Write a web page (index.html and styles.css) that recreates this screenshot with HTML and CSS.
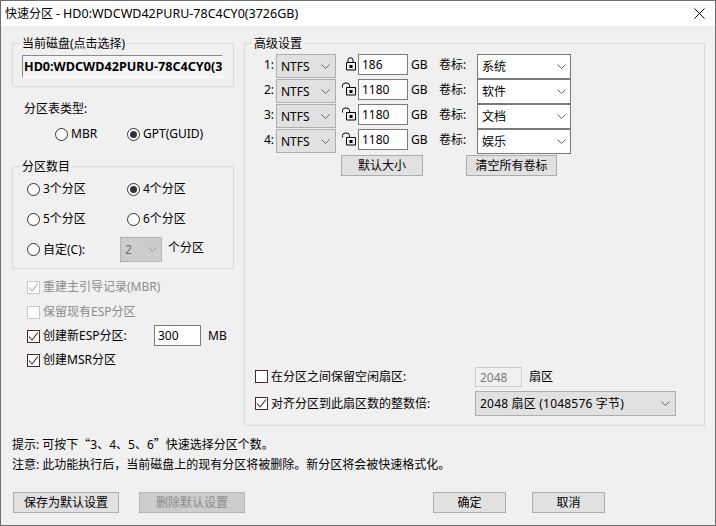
FILE: index.html
```html
<!DOCTYPE html>
<html lang="zh-CN">
<head>
<meta charset="utf-8">
<title>快速分区</title>
<link rel="stylesheet" href="styles.css">
</head>
<body>
<svg class="defs" width="0" height="0" aria-hidden="true">
  <symbol id="chev" viewBox="0 0 9 5"><path d="M.5.5 4.5 4.5 8.5.5" fill="none" stroke="currentColor"/></symbol>
  <symbol id="tick" viewBox="0 0 11 11"><path d="M1 5.5 4 9 10 1.5" fill="none" stroke="currentColor" stroke-width="1.1"/></symbol>
  <symbol id="lock" viewBox="0 0 16 14"><path d="M7 5.5V3.2a2.5 2.5 0 0 1 5 0V5.5M5.5 5.5h9v7.5h-9z" fill="none" stroke="#000"/><rect x="8.5" y="8" width="3" height="3"/></symbol>
  <symbol id="unlock" viewBox="0 0 16 14"><path d="M1.5 5.5V3.4a3.4 2.4 0 0 1 7 0V5.5M5.5 5.5h9v7.5h-9z" fill="none" stroke="#000"/><rect x="8.5" y="8" width="3" height="3"/></symbol>
</svg>
<div class="dialog">
  <header class="titlebar">
    <span class="title">快速分区 - <span class="title-disk">HD0:WDCWD42PURU-78C4CY0(3726GB)</span></span>
    <svg class="close" width="11" height="11" viewBox="0 0 11 11"><path d="M.5.5 10.5 10.5M10.5.5.5 10.5" stroke="#000" fill="none"/></svg>
  </header>

  <main class="main">
    <div class="left">
      <fieldset class="group">
        <legend>当前磁盘(点击选择)</legend>
        <div class="disk-body"><div class="disk-field">HD0:WDCWD42PURU-78C4CY0(3</div></div>
      </fieldset>

      <div class="table-type">分区表类型:</div>
      <div class="table-options">
        <label class="opt opt-mbr"><span class="radio"></span>MBR</label>
        <label class="opt"><span class="radio on"></span>GPT(GUID)</label>
      </div>

      <fieldset class="group count-group">
        <legend>分区数目</legend>
        <div class="count-body">
          <div class="count-row">
            <label class="opt opt-count"><span class="radio"></span>3个分区</label>
            <label class="opt"><span class="radio on"></span>4个分区</label>
          </div>
          <div class="count-row">
            <label class="opt opt-count"><span class="radio"></span>5个分区</label>
            <label class="opt"><span class="radio"></span>6个分区</label>
          </div>
          <div class="count-row custom-row">
            <label class="opt opt-custom"><span class="radio"></span>自定(C):</label>
            <span class="combo combo-off"><span>2</span><svg class="chev"><use href="#chev"/></svg></span>
            <span class="custom-unit">个分区</span>
          </div>
        </div>
      </fieldset>

      <div class="checks">
        <label class="chk-row off"><span class="check"><svg><use href="#tick"/></svg></span>重建主引导记录(MBR)</label>
        <label class="chk-row off second"><span class="check"></span>保留现有ESP分区</label>
        <div class="chk-row">
          <span class="check"><svg><use href="#tick"/></svg></span><span class="esp-label">创建新ESP分区:</span>
          <span class="field esp-size">300</span><span class="esp-unit">MB</span>
        </div>
        <label class="chk-row msr"><span class="check"><svg><use href="#tick"/></svg></span>创建MSR分区</label>
      </div>
    </div>

    <fieldset class="group right">
      <legend>高级设置</legend>
      <div class="adv-body">
        <div class="parts">
          <div class="part">
            <span class="p-num">1:</span>
            <span class="combo combo-fs"><span>NTFS</span><svg class="chev"><use href="#chev"/></svg></span>
            <svg class="lock"><use href="#lock"/></svg>
            <span class="field p-size">186</span>
            <span class="p-unit">GB</span><span class="p-tag">卷标:</span>
            <span class="combo combo-vol"><span>系统</span><svg class="chev"><use href="#chev"/></svg></span>
          </div>
          <div class="part">
            <span class="p-num">2:</span>
            <span class="combo combo-fs"><span>NTFS</span><svg class="chev"><use href="#chev"/></svg></span>
            <svg class="lock"><use href="#unlock"/></svg>
            <span class="field p-size">1180</span>
            <span class="p-unit">GB</span><span class="p-tag">卷标:</span>
            <span class="combo combo-vol"><span>软件</span><svg class="chev"><use href="#chev"/></svg></span>
          </div>
          <div class="part">
            <span class="p-num">3:</span>
            <span class="combo combo-fs"><span>NTFS</span><svg class="chev"><use href="#chev"/></svg></span>
            <svg class="lock"><use href="#unlock"/></svg>
            <span class="field p-size">1180</span>
            <span class="p-unit">GB</span><span class="p-tag">卷标:</span>
            <span class="combo combo-vol"><span>文档</span><svg class="chev"><use href="#chev"/></svg></span>
          </div>
          <div class="part">
            <span class="p-num">4:</span>
            <span class="combo combo-fs"><span>NTFS</span><svg class="chev"><use href="#chev"/></svg></span>
            <svg class="lock"><use href="#unlock"/></svg>
            <span class="field p-size">1180</span>
            <span class="p-unit">GB</span><span class="p-tag">卷标:</span>
            <span class="combo combo-vol"><span>娱乐</span><svg class="chev"><use href="#chev"/></svg></span>
          </div>
        </div>
        <div class="part-actions">
          <button class="btn btn-default" type="button">默认大小</button>
          <button class="btn btn-clear" type="button">清空所有卷标</button>
        </div>

        <div class="adv-bottom">
          <div class="sector-row">
            <span class="check"></span><span class="sector-label">在分区之间保留空闲扇区:</span>
            <span class="field field-off">2048</span><span class="sector-unit">扇区</span>
          </div>
          <div class="sector-row align-row">
            <span class="check"><svg><use href="#tick"/></svg></span><span class="sector-label">对齐分区到此扇区数的整数倍:</span>
            <span class="combo combo-align"><span>2048 扇区 (1048576 字节)</span><svg class="chev"><use href="#chev"/></svg></span>
          </div>
        </div>
      </div>
    </fieldset>
  </main>

  <section class="notes">
    <p>提示: 可按下<span class="cjk">“</span>3、4、5、6<span class="cjk">”</span>快速选择分区个数。</p>
    <p>注意: 此功能执行后，当前磁盘上的现有分区将被删除。新分区将会被快速格式化。</p>
  </section>

  <footer class="footer">
    <button class="btn btn-wide" type="button">保存为默认设置</button>
    <button class="btn btn-wide btn-off" type="button" disabled>删除默认设置</button>
    <button class="btn btn-ok" type="button">确定</button>
    <button class="btn btn-cancel" type="button">取消</button>
  </footer>
</div>
</body>
</html>
```

FILE: styles.css
```css
* { box-sizing: border-box; }
html, body { margin: 0; padding: 0; }
body {
  font-family: "Noto Sans", "Noto Sans CJK SC", sans-serif;
  font-size: 12px;
  line-height: 16px;
  color: #000;
  background: #f0f0f0;
}
.defs { position: absolute; }
.cjk { font-family: "Noto Sans CJK SC", sans-serif; line-height: 0; }

.dialog {
  width: 716px;
  height: 526px;
  border: 1px solid #6e6e6e;
  background: #f0f0f0;
  display: flex;
  flex-direction: column;
  overflow: hidden;
}

.titlebar {
  height: 25px;
  flex: none;
  background: #fff;
  display: flex;
  align-items: center;
  justify-content: space-between;
  padding: 0 10px 0 4px;
}
.title-disk { font-size: 12.5px; }
.close { display: block; }

.main {
  flex: none;
  display: flex;
  gap: 10px;
  padding: 9px 0 0 11px;
}
.left { width: 222px; flex: none; }
.right { width: 461px; flex: none; height: 391px; }

.group {
  margin: 0;
  padding: 0;
  min-width: 0;
  border: 1px solid #dadada;
}
.group legend {
  margin-left: 7px;
  padding: 0 2px;
  height: 16px;
  line-height: 18px;
}

/* disk */
.disk-body { padding: 4px 10px 8px 9px; }
.disk-field {
  height: 23px;
  line-height: 22px;
  padding-left: 1px;
  font-weight: 700;
  font-size: 12.6px;
  white-space: nowrap;
  overflow: hidden;
  background: #f4f4f4;
  border-top: 1px solid #8a8a8a;
  border-left: 1px solid #8a8a8a;
  border-right: 1px solid #fff;
  border-bottom: 1px solid #fff;
}

.table-type { margin: 14px 0 0 12px; }
.table-options { display: flex; margin: 9px 0 0 43px; }
.opt { display: flex; align-items: center; height: 16px; white-space: nowrap; }
.opt-mbr { width: 72px; }

.radio {
  width: 13px;
  height: 13px;
  flex: none;
  margin-right: 3px;
  border: 1px solid #333;
  border-radius: 50%;
  background: #fff;
  display: flex;
  align-items: center;
  justify-content: center;
}
.radio.on::after {
  content: "";
  width: 7px;
  height: 7px;
  border-radius: 50%;
  background: #333;
}

/* partition count */
.count-group { margin-top: 16px; }
.count-body { padding: 7px 0 6px 14px; }
.count-row { display: flex; align-items: center; height: 16px; margin-bottom: 14px; }
.opt-count { width: 100px; }
.custom-row { height: 25px; margin: -4px 0 0; }
.opt-custom { width: 93px; }
.custom-unit { margin: 0 0 3px 6px; }

.combo {
  display: flex;
  align-items: center;
  justify-content: space-between;
  flex: none;
  white-space: nowrap;
}
.chev { width: 9px; height: 5px; flex: none; color: #666; display: block; }
.combo-off {
  width: 42px;
  height: 25px;
  padding: 0 4px;
  background: #cccccc;
  color: #6d6d6d;
  border: 1px dotted #9a9a9a;
}
.combo-off .chev { color: #9a9a9a; }

/* checks */
.checks { padding: 8px 0 0 15px; }
.chk-row { display: flex; align-items: center; height: 20px; white-space: nowrap; margin-bottom: 5px; }
.chk-row.second { margin-bottom: 4px; }
.chk-row.msr { margin: -1px 0 0; }
.chk-row.off { color: #8c8c8c; }
.check {
  width: 13px;
  height: 13px;
  flex: none;
  margin-right: 3px;
  padding: 0;
  border: 1px solid #4a2a2a;
  background: #fff;
  color: #333;
  display: flex;
  align-items: center;
  justify-content: center;
}
.check svg { width: 11px; height: 11px; display: block; }
.off .check { border-color: #c8c8c8; color: #a8a8a8; }
.esp-label { width: 111px; }
.field {
  display: block;
  height: 21px;
  line-height: 19px;
  padding-left: 3px;
  background: #fff;
  border: 1px solid #7a7a7a;
  flex: none;
}
.esp-size { width: 47px; margin-top: -2px; }
.esp-unit { margin-left: 7px; }

/* advanced */
.adv-body {
  height: 373px;
  padding: 3px 0 8px 10px;
  display: flex;
  flex-direction: column;
}
.part { display: flex; align-items: flex-start; height: 25px; padding-left: 9px; line-height: 21px; }
.p-num { width: 12px; flex: none; }
.combo-fs {
  width: 60px;
  height: 24px;
  padding: 0 5px 0 4px;
  background: #e1e1e1;
  border: 1px solid #adadad;
}
.lock { width: 16px; height: 14px; flex: none; margin: 3px 1px 0 5px; display: block; }
.p-size { width: 50px; }
.p-unit { width: 31px; padding-left: 3px; flex: none; }
.p-tag { width: 38px; flex: none; }
.combo-vol {
  width: 94px;
  height: 25px;
  padding: 0 4px;
  background: #fff;
  border: 1px solid #7a7a7a;
}

.btn {
  font: inherit;
  color: #000;
  height: 21px;
  padding: 0;
  background: #e1e1e1;
  border: 1px solid #adadad;
  border-radius: 0;
  flex: none;
}
.part-actions { display: flex; padding: 1px 0 0 86px; }
.btn-default { width: 82px; }
.btn-clear { width: 91px; margin-left: 43px; }

.adv-bottom { margin-top: auto; }
.sector-row { display: flex; align-items: center; height: 21px; }
.align-row { height: 25px; margin-top: 4px; }
.sector-label { width: 204px; flex: none; }
.field-off {
  width: 47px;
  height: 20px;
  padding-left: 4px;
  color: #7a7a7a;
  background: #f0f0f0;
  border-color: #cccccc;
}
.sector-unit { margin-left: 7px; }
.combo-align {
  width: 201px;
  height: 25px;
  padding: 0 5px 0 4px;
  background: #e1e1e1;
  border: 1px solid #adadad;
  letter-spacing: .2px;
}

/* notes */
.notes { margin: 9px 0 0 11px; line-height: 20px; }
.notes p { margin: 0; }

.footer { display: flex; margin-top: 17px; padding-left: 12px; }
.btn-wide { width: 106px; }
.btn-off {
  margin-left: 20px;
  background: #cccccc;
  color: #8a8a8a;
  border: 1px dotted #a0a0a0;
}
.btn-ok { width: 73px; margin-left: 188px; }
.btn-cancel { width: 73px; margin-left: 26px; }
```
